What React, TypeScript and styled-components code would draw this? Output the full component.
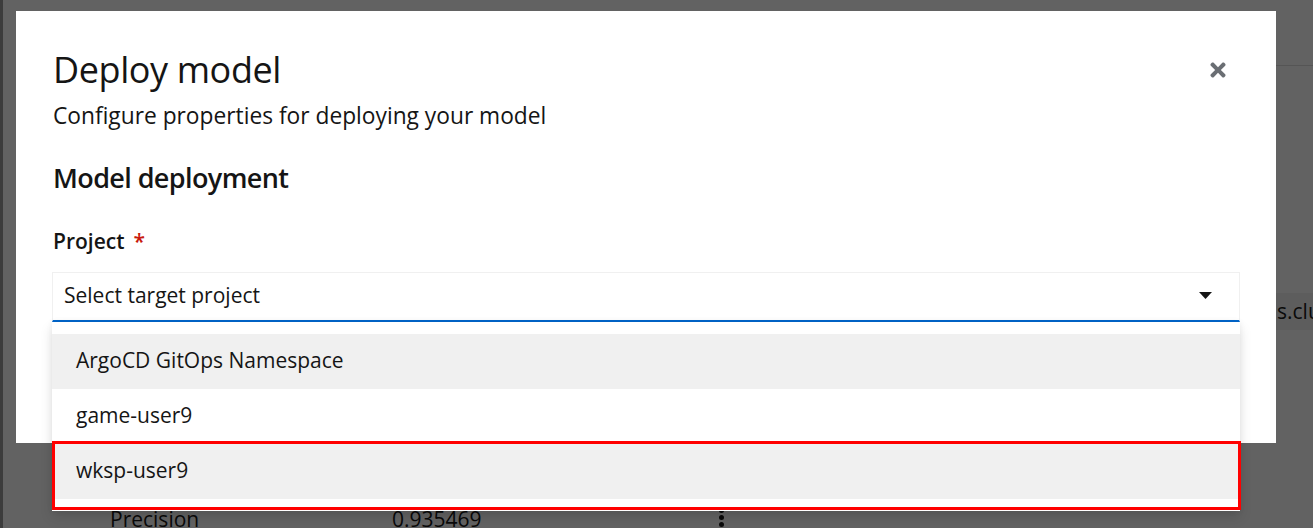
import React from "react";
import styled, { createGlobalStyle } from "styled-components";
import { FaTimes } from "react-icons/fa";

const GlobalStyle = createGlobalStyle`
  html, body {
    margin: 0;
    padding: 0;
    width: 100%;
    height: 100%;
    overflow: hidden;
    font-family: "Open Sans", "Liberation Sans", sans-serif;
    color: #151515;
  }
  * { box-sizing: border-box; }
`;

/* ---------- underlying page ---------- */
const Page = styled.div`
  display: flex;
  height: 100vh;
  overflow: hidden;
  background: #fbfbfb;
`;

const SideEdge = styled.div`
  flex: none;
  width: 3px;
  background: #9a9a9a;
`;

const Main = styled.div`
  flex: 1;
  min-width: 0;
`;

const Masthead = styled.header`
  height: 66px;
  display: grid;
  grid-template-columns: 1fr 60px;
`;

const HeaderTools = styled.div`
  border-bottom: 1px solid #dbdbdb;
`;

const EndpointRow = styled.div`
  margin-top: 227px;
  display: grid;
  grid-template-columns: 1273px 1fr;
`;

const EndpointField = styled.div`
  grid-column: 2;
  height: 37px;
  line-height: 37px;
  padding-left: 1px;
  background: #f0f0f0;
  font-size: 21px;
  white-space: nowrap;
  overflow: hidden;
`;

const MetricRow = styled.div`
  margin-top: 173px;
  padding-left: 107px;
  display: grid;
  grid-template-columns: 282px 327px auto;
  align-items: start;
  font-size: 21px;
  line-height: 32px;
`;

const Kebab = styled.svg`
  margin-top: 5px;
`;

/* ---------- modal ---------- */
const Backdrop = styled.div`
  position: fixed;
  inset: 0;
  background: rgba(3, 3, 3, 0.62);
  padding: 11px 0 0 16px;
`;

const Modal = styled.div`
  width: 1260px;
  height: 432px;
  background: #ffffff;
  padding: 35px 36px 0 37px;
  display: flex;
  flex-direction: column;
`;

const TitleRow = styled.div`
  display: flex;
  align-items: flex-start;
  justify-content: space-between;
`;

const Title = styled.h1`
  margin: 0;
  font-size: 36px;
  line-height: 47px;
  font-weight: 400;
  letter-spacing: -0.4px;
`;

const CloseButton = styled.button`
  margin-top: 1px;
  width: 45px;
  height: 45px;
  display: flex;
  align-items: center;
  justify-content: center;
  border: none;
  background: transparent;
  color: #6a6e73;
  padding: 0;
  cursor: pointer;
`;

const Description = styled.p`
  margin: 7px 0 0;
  font-size: 22.75px;
  line-height: 32px;
`;

const SectionTitle = styled.h2`
  margin: 28px 0 0;
  font-size: 27px;
  line-height: 35px;
  font-weight: 600;
  letter-spacing: -0.6px;
`;

const FormGroup = styled.div`
  margin-top: 30px;
  margin-left: -1px;
  display: flex;
  flex-direction: column;
`;

const Label = styled.label`
  margin-left: 1px;
  font-size: 21px;
  line-height: 32px;
  font-weight: 600;
`;

const Required = styled.span`
  margin-left: 9px;
  color: #c9190b;
  font-weight: 600;
`;

const SelectWrap = styled.div`
  position: relative;
  margin-top: 15px;
`;

const SelectToggle = styled.div`
  height: 50px;
  display: flex;
  align-items: center;
  justify-content: space-between;
  padding: 6px 27px 9px 11px;
  border: 1px solid #f0f0f0;
  border-bottom: 2px solid #0066cc;
  font-size: 21px;
  line-height: 32px;
`;

const Menu = styled.ul`
  position: absolute;
  top: 100%;
  left: 0;
  right: 0;
  margin: 0;
  padding: 12px 0;
  list-style: none;
  background: #ffffff;
  box-shadow: 0 6px 12px 0 rgba(3, 3, 3, 0.12), 0 0 6px 0 rgba(3, 3, 3, 0.06);
`;

const MenuItem = styled.li<{ $active?: boolean }>`
  height: 55px;
  padding: 10px 24px 13px;
  font-size: 21px;
  line-height: 32px;
  background: ${(p) => (p.$active ? "#f0f0f0" : "#ffffff")};
  white-space: nowrap;
`;

const Annotation = styled.div`
  position: absolute;
  top: 119px;
  left: 0;
  right: -1px;
  height: 69px;
  border: 3px solid #ff0000;
  pointer-events: none;
`;

const Caret = () => (
  <svg width="13" height="7" viewBox="0 0 13 7" aria-hidden="true">
    <polygon points="0,0 13,0 6.5,7" fill="#151515" />
  </svg>
);

export default function App() {
  return (
    <>
      <GlobalStyle />
      <Page>
        <SideEdge />
        <Main>
          <Masthead>
            <div />
            <HeaderTools />
          </Masthead>
          <EndpointRow>
            <EndpointField>s.clu</EndpointField>
          </EndpointRow>
          <MetricRow>
            <span>Precision</span>
            <span>0.935469</span>
            <Kebab width="5" height="20" viewBox="0 0 5 20" aria-hidden="true">
              <circle cx="2.5" cy="2.5" r="2.5" fill="#151515" />
              <circle cx="2.5" cy="9.5" r="2.5" fill="#151515" />
              <circle cx="2.5" cy="16.5" r="2.5" fill="#151515" />
            </Kebab>
          </MetricRow>
        </Main>
      </Page>
      <Backdrop>
        <Modal role="dialog" aria-label="Deploy model">
          <TitleRow>
            <Title>Deploy model</Title>
            <CloseButton aria-label="Close">
              <FaTimes size={22} />
            </CloseButton>
          </TitleRow>
          <Description>Configure properties for deploying your model</Description>
          <SectionTitle>Model deployment</SectionTitle>
          <FormGroup>
            <Label>
              Project<Required>*</Required>
            </Label>
            <SelectWrap>
              <SelectToggle>
                <span>Select target project</span>
                <Caret />
              </SelectToggle>
              <Menu role="listbox">
                <MenuItem $active>ArgoCD GitOps Namespace</MenuItem>
                <MenuItem>game-user9</MenuItem>
                <MenuItem $active>wksp-user9</MenuItem>
                <Annotation />
              </Menu>
            </SelectWrap>
          </FormGroup>
        </Modal>
      </Backdrop>
    </>
  );
}
